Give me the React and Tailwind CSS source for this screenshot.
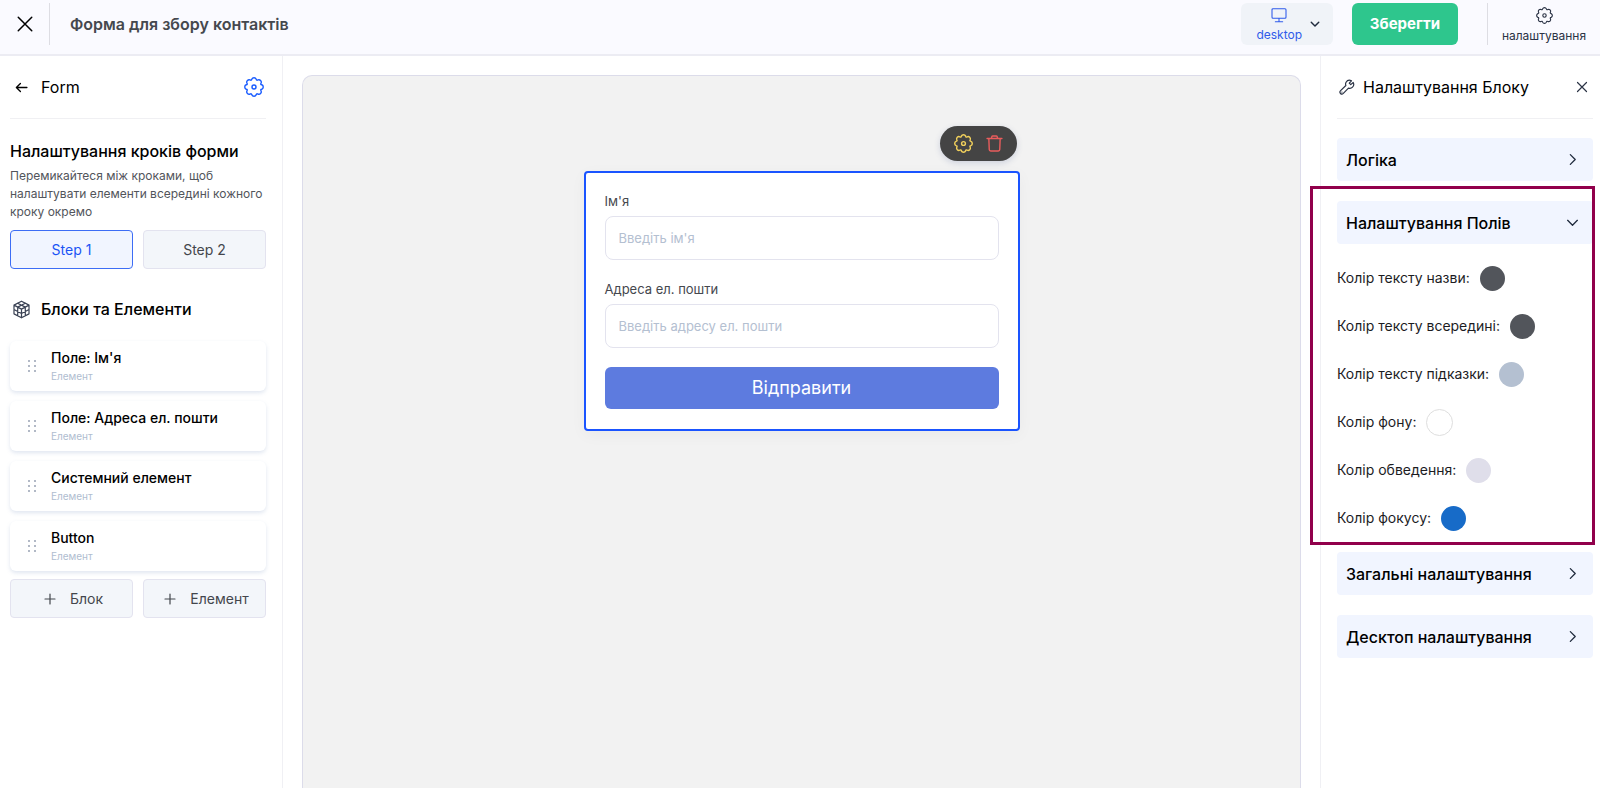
import { useState } from "react";

const polar = (degrees, radius) => {
  const a = (degrees * Math.PI) / 180;
  return (12 + radius * Math.sin(a)).toFixed(2) + " " + (12 - radius * Math.cos(a)).toFixed(2);
};

const GEAR =
  "M" + polar(-16, 9.7) +
  [0, 45, 90, 135, 180, 225, 270, 315]
    .map((c) => "A2.9 2.9 0 0 1 " + polar(c + 16, 9.7) + "Q" + polar(c + 22.5, 8) + " " + polar(c + 29, 9.7))
    .join("") +
  "Z";

function Gear({ className = "", width = 1.5 }) {
  return (
    <svg viewBox="0 0 24 24" className={className} fill="none" stroke="currentColor" strokeWidth={width} strokeLinecap="round" strokeLinejoin="round" aria-hidden="true">
      <circle cx="12" cy="12" r="2.4" />
      <path d={GEAR} />
    </svg>
  );
}

function Stroke({ d, className = "", width = 1.5 }) {
  return (
    <svg viewBox="0 0 24 24" className={className} fill="none" stroke="currentColor" strokeWidth={width} strokeLinecap="round" strokeLinejoin="round" aria-hidden="true">
      <path d={d} />
    </svg>
  );
}

const CLOSE = "M3 3L21 21M21 3L3 21";
const CHEVRON_RIGHT = "M8 3L17 12L8 21";
const CHEVRON_DOWN = "M3 8L12 17L21 8";
const PLUS = "M12 2V22M2 12H22";
const ARROW = "M22 12H3M10 4.5L2.5 12L10 19.5";
const MONITOR = "M3 2.5H21A1.5 1.5 0 0 1 22.5 4V15.5A1.5 1.5 0 0 1 21 17H3A1.5 1.5 0 0 1 1.5 15.5V4A1.5 1.5 0 0 1 3 2.5ZM12 17V22M6.5 22H17.5";
const TRASH = "M1.5 5H22.5M4 5L4.6 20.5A2 2 0 0 0 6.6 22.5H17.4A2 2 0 0 0 19.4 20.5L20 5M7.5 5L8.2 2.6A1.6 1.6 0 0 1 9.8 1.5H14.2A1.6 1.6 0 0 1 15.8 2.6L16.5 5";
const CUBE = "M12 1.5L21.5 6.5V17.5L12 22.5L2.5 17.5V6.5ZM2.5 6.5L12 11.5L21.5 6.5M12 11.5V22.5M7.2 4L16.8 9V20M16.8 4L7.2 9V20M2.5 12L12 17L21.5 12";
const WRENCH = "M21.3 5.2L17.6 8.4L15.4 6.2L18.7 2.6C15.7 1.2 12.2 2.2 10.6 4.8C9.7 6.4 9.7 8.2 10.3 9.8L2.4 17.4C1.1 18.8 1.2 20.6 2.3 21.7C3.4 22.8 5.2 22.8 6.5 21.5L14.2 13.7C16.2 14.5 18.6 14 20.3 12.3C22.3 10.3 22.5 7.5 21.3 5.2ZM4.4 19.6H4.5";

const ELEMENTS = ["Поле: Ім'я", "Поле: Адреса ел. пошти", "Системний елемент", "Button"];

const COLORS = [
  ["Колір тексту назви:", "size-[25px] bg-[#52555b]"],
  ["Колір тексту всередині:", "size-[25px] bg-[#52555b]"],
  ["Колір тексту підказки:", "size-[25px] bg-[#b4c0d1]"],
  ["Колір фону:", "size-[27px] border border-[#dedede] bg-white"],
  ["Колір обведення:", "size-[25px] bg-[#dfdeea]"],
  ["Колір фокусу:", "size-[25px] bg-[#176bc8]"],
];

function TopBar() {
  return (
    <header className="flex h-14 shrink-0 items-start justify-between border-b-2 border-[#ececf3] bg-[#fafaff] pt-[3px]">
      <div className="flex h-[42px] items-center">
        <button aria-label="Закрити" className="flex h-full w-[49px] items-center justify-center text-black">
          <Stroke d={CLOSE} className="size-[18px]" width={2} />
        </button>
        <span className="h-full w-px bg-[#dddde3]" />
        <h1 className="pl-5 text-base font-semibold text-[#45484e]">Форма для збору контактів</h1>
      </div>
      <div className="flex h-[42px] items-center">
        <button className="flex h-full w-[92px] items-center justify-end gap-2 rounded-md bg-[#f0f3f8] pr-[13px] text-[#1f2a3d]">
          <span className="flex flex-col items-center gap-1 pt-[2px] text-xs text-[#2f5bea]">
            <Stroke d={MONITOR} className="size-4" width={1.6} />
            desktop
          </span>
          <Stroke d={CHEVRON_DOWN} className="size-[10px]" width={3.4} />
        </button>
        <button className="ml-[19px] h-full w-[106px] rounded-md bg-[#2ec68d] text-[15px] font-bold text-white">Зберегти</button>
        <span className="ml-[29px] h-full w-px bg-[#dddde3]" />
        <button className="flex h-full w-28 flex-col items-center justify-center gap-1 pt-[2px] text-xs text-[#2b3345]">
          <Gear className="size-[17px]" width={1.6} />
          налаштування
        </button>
      </div>
    </header>
  );
}

function LeftPanel() {
  const [step, setStep] = useState(1);
  const box = "flex h-[39px] flex-1 items-center justify-center rounded border text-sm ";
  const idle = "border-[#e3e3ef] bg-[#f3f6fa] text-[#43464c]";
  return (
    <aside className="w-[283px] shrink-0 border-r border-[#f0f0f4] pr-4 pl-[10px]">
      <div className="flex h-[63px] items-center border-b border-[#f0f0f3]">
        <button aria-label="Назад" className="ml-[3px] flex size-4 items-center justify-center text-black">
          <Stroke d={ARROW} className="size-[13px]" width={2.4} />
        </button>
        <h2 className="ml-3 flex-1 text-base text-black">Form</h2>
        <button aria-label="Налаштування форми" className="mr-[2px] text-[#1a5cff]">
          <Gear className="size-5" width={1.7} />
        </button>
      </div>
      <h3 className="mt-5 text-base leading-6 font-medium text-black">Налаштування кроків форми</h3>
      <p className="mt-1 text-xs leading-[18px] text-[#52555b]">
        Перемикайтеся між кроками, щоб налаштувати елементи всередині кожного кроку окремо
      </p>
      <div className="mt-[9px] flex gap-[10px]">
        {[1, 2].map((n) => (
          <button key={n} onClick={() => setStep(n)} className={box + (step === n ? "border-[#3d6df5] bg-[#f1f5ff] text-[#1a54f5]" : idle)}>
            Step {n}
          </button>
        ))}
      </div>
      <div className="mt-7 flex h-6 items-center gap-[10px] pl-[2px]">
        <Stroke d={CUBE} className="size-[19px] text-[#3a4254]" width={1.5} />
        <h3 className="text-base font-medium text-black">Блоки та Елементи</h3>
      </div>
      <ul className="mt-5 flex flex-col gap-[10px]">
        {ELEMENTS.map((name) => (
          <li key={name} className="flex h-[50px] items-center rounded-md bg-white pl-[18px] shadow-[0_2px_4px_rgba(100,130,180,0.2)]">
            <span className="grid grid-cols-2 gap-x-1 gap-y-[3px]">
              {[0, 1, 2, 3, 4, 5].map((i) => (
                <span key={i} className="size-[2px] rounded-full bg-[#98a2b3]" />
              ))}
            </span>
            <div className="ml-[15px]">
              <p className="text-sm leading-5 font-medium text-black">{name}</p>
              <p className="text-[10px] leading-4 text-[#b0bdd0]">Елемент</p>
            </div>
          </li>
        ))}
      </ul>
      <div className="mt-2 flex gap-[10px]">
        {["Блок", "Елемент"].map((name) => (
          <button key={name} className={box + "gap-[14px] pl-1 " + idle}>
            <Stroke d={PLUS} className="size-3" width={2.4} />
            {name}
          </button>
        ))}
      </div>
    </aside>
  );
}

function Field({ id, label, placeholder }) {
  return (
    <div className="mb-[19px]">
      <label htmlFor={id} className="block text-[13px] leading-5 text-[#45484e]">{label}</label>
      <input id={id} placeholder={placeholder} className="mt-[5px] block h-11 w-full rounded-lg border border-[#e3e3ee] bg-white px-[13px] text-[13px] text-[#52555b] placeholder:text-[#b4c0d1]" />
    </div>
  );
}

function Canvas() {
  return (
    <main className="flex min-w-0 flex-1 flex-col px-[19px] pt-[19px]">
      <div className="flex flex-1 justify-center rounded-t-[10px] border border-b-0 border-[#dcdcea] bg-[#f2f2f2] pt-[95px]">
        <div className="relative w-[436px] self-start rounded border-2 border-[#1a54ff] bg-white px-[19px] pt-[18px] pb-5 shadow-[0_4px_16px_rgba(0,0,0,0.04)]">
          <div className="absolute -top-[47px] right-[1px] flex h-[35px] w-[77px] items-center justify-center gap-[13px] rounded-full bg-[#444444] shadow-[0_2px_6px_rgba(60,80,140,0.2)]">
            <button aria-label="Налаштувати" className="text-[#f2d15c]">
              <Gear className="size-[19px]" width={1.8} />
            </button>
            <button aria-label="Видалити" className="text-[#e85c5c]">
              <Stroke d={TRASH} className="size-[17px]" width={2} />
            </button>
          </div>
          <form onSubmit={(e) => e.preventDefault()}>
            <Field id="name" label="Ім'я" placeholder="Введіть ім'я" />
            <Field id="email" label="Адреса ел. пошти" placeholder="Введіть адресу ел. пошти" />
            <button className="block h-[42px] w-full rounded-md bg-[#5d7bdf] text-lg text-white">Відправити</button>
          </form>
        </div>
      </div>
    </main>
  );
}

function Section({ title, open = false }) {
  return (
    <button aria-expanded={open} className="flex h-[43px] w-full items-center justify-between rounded bg-[#f1f5ff] pr-[14px] pl-[9px] text-base font-medium text-black">
      {title}
      <Stroke d={open ? CHEVRON_DOWN : CHEVRON_RIGHT} className="size-[13px] text-[#1f2a3d]" width={2.4} />
    </button>
  );
}

function RightPanel() {
  return (
    <aside className="w-[280px] shrink-0 border-l border-[#f0f0f4] pr-[7px] pl-4">
      <div className="flex h-[63px] items-center border-b border-[#f0f0f3]">
        <Stroke d={WRENCH} className="ml-[2px] size-4 text-[#2b3345]" width={1.8} />
        <h2 className="ml-2 flex-1 text-base text-black">Налаштування Блоку</h2>
        <button aria-label="Закрити панель" className="mr-[5px] text-[#2b3345]">
          <Stroke d={CLOSE} className="size-3" width={2.4} />
        </button>
      </div>
      <div className="mt-[19px] flex flex-col gap-5">
        <Section title="Логіка" />
        <div className="relative -mb-[10px]">
          <div className="pointer-events-none absolute -top-[15px] -right-[2px] -bottom-[3px] -left-[27px] border-3 border-[#91004b]" />
          <Section title="Налаштування Полів" open />
          <div className="mt-[10px]">
            {COLORS.map(([label, swatch]) => (
              <div key={label} className="flex h-12 items-center gap-[10px]">
                <span className="text-sm text-[#1c1c1f]">{label}</span>
                <button aria-label={label} className={"rounded-full " + swatch} />
              </div>
            ))}
          </div>
        </div>
        <Section title="Загальні налаштування" />
        <Section title="Десктоп налаштування" />
      </div>
    </aside>
  );
}

export default function App() {
  return (
    <div className="flex min-h-screen flex-col bg-white font-['Inter',sans-serif]">
      <TopBar />
      <div className="flex flex-1">
        <LeftPanel />
        <Canvas />
        <RightPanel />
      </div>
    </div>
  );
}
